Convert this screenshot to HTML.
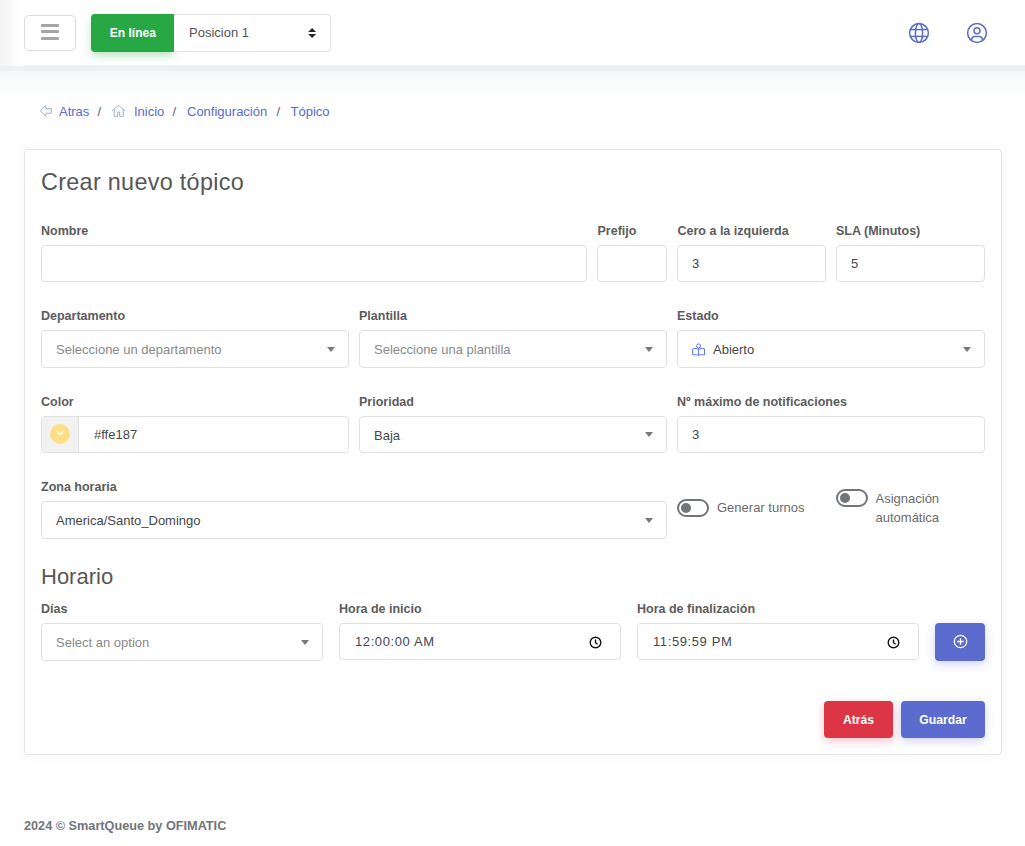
<!DOCTYPE html>
<html>
<head>
<meta charset="utf-8">
<style>
*{box-sizing:border-box;margin:0;padding:0}
html,body{width:1025px;height:846px;overflow:hidden}
body{background:#fefefe;font-family:"Liberation Sans",sans-serif;position:relative;color:#595d6e}
.a{position:absolute}
.t{position:absolute;white-space:nowrap;line-height:1}
#hdr{left:0;top:0;width:1025px;height:66px;background:#fff}
#shd{left:0;top:65px;width:1025px;height:32px;background:linear-gradient(#f1f4f4 0,#ecf0f0 1.5px,#edf1f1 5.5px,#f4f7f7 6.5px,#f8fafa 14px,#fbfcfc 22px,#fefefe 32px)}
#lsh{left:0;top:0;width:24px;height:66px;background:linear-gradient(to right,#f5f5f5 0,#f7f7f7 8px,#fff 22px)}
.ham{left:24px;top:15px;width:52px;height:36px;border:1px solid #dcdcdc;border-radius:5px;background:#fff}
.ham i{position:absolute;left:16px;width:18px;height:3px;background:#a5a5a5;border-radius:1px}
.gbtn{left:91px;top:14px;width:83px;height:38px;background:#28a745;border-radius:4px 0 0 4px;box-shadow:0 4px 8px rgba(40,167,69,.3);color:#fff;font-weight:bold;font-size:12px}
.psel{left:174px;top:14px;width:157px;height:38px;border:1px solid #e2e2e2;border-left:0;border-radius:0 4px 4px 0;background:#fff}
.lbl{font-weight:bold;font-size:12.5px;color:#5c5c5c}
.inp{position:absolute;height:37px;border:1px solid #e0e0e0;border-radius:4px;background:#fff}
.val{font-size:13px;color:#464749}
.ph{font-size:13px;color:#898a8c}
.tri{position:absolute;width:0;height:0;border-left:4.5px solid transparent;border-right:4.5px solid transparent;border-top:5px solid #7a7a7a}
.crumb{font-size:13px;color:#5b6bce}
.sl{font-size:13px;color:#5f6166}
.card{left:24px;top:149px;width:978px;height:606px;background:#fff;border:1px solid #e6e6e6;border-radius:4px;box-shadow:0 0 10px rgba(20,90,90,.06)}
.h3{font-size:23.4px;color:#575757}
.tog{position:absolute;width:31.5px;height:18px;border:2px solid #727578;border-radius:9px}
.tog i{position:absolute;left:2px;top:2px;width:10px;height:10px;border-radius:50%;background:#727578}
.swl{font-size:13px;color:#6a6b6d}
.btn{position:absolute;height:37px;border-radius:4px;color:#fff;font-weight:bold;font-size:12.2px;text-align:center;line-height:39px}
</style>
</head>
<body>
<div id="hdr" class="a"></div>
<div id="shd" class="a"></div>
<div id="lsh" class="a"></div>

<div class="a ham"><i style="top:8px"></i><i style="top:14.3px"></i><i style="top:21px"></i></div>
<div class="a gbtn"><span class="t" style="left:18.8px;top:12.5px">En línea</span></div>
<div class="a psel">
  <span class="t" style="left:15px;top:10.5px;font-size:13px;color:#555">Posicion 1</span>
  <svg class="a" style="left:133px;top:12px" width="11" height="12" viewBox="0 0 11 12"><path d="M5.1 1L9.1 4.9H1.1Z M1.1 7H9.1L5.1 10.9Z" fill="#23272b"/></svg>
</div>

<svg class="a" style="left:908px;top:22px" width="22" height="22" viewBox="0 0 22 22" fill="none" stroke="#5b6bce" stroke-width="1.5">
  <circle cx="11" cy="11" r="9.4"/>
  <ellipse cx="11" cy="11" rx="3.6" ry="9.4"/>
  <line x1="2" y1="7.6" x2="20" y2="7.6"/>
  <line x1="2" y1="14.4" x2="20" y2="14.4"/>
</svg>
<svg class="a" style="left:966px;top:22px" width="22" height="22" viewBox="0 0 22 22" fill="none" stroke="#5b6bce" stroke-width="1.5">
  <circle cx="11" cy="11" r="9.4"/>
  <circle cx="11" cy="8.7" r="3"/>
  <path d="M5.6 18 C5.8 15.5 7.2 14.6 9 14.6 H13 C14.8 14.6 16.2 15.5 16.4 18"/>
</svg>

<!-- breadcrumb -->
<svg class="a" style="left:39px;top:104px" width="14" height="14" viewBox="0 0 14 14" fill="none" stroke="#9fb3c4" stroke-width="1">
  <path d="M1.3 6.9 L6.8 1.5 V4.6 H12.2 V9.2 H6.8 V12.4 Z" stroke-linejoin="round"/>
</svg>
<span class="t crumb" style="left:59px;top:104.5px">Atras</span>
<span class="t sl" style="left:97.5px;top:104.5px">/</span>
<svg class="a" style="left:111px;top:103px" width="15" height="15" viewBox="0 0 15 15" fill="none" stroke="#9fb3c4" stroke-width="1">
  <path d="M1.2 7.8 L7.5 2.4 L13.9 7.8 M3.2 6.2 V13.4 H6.4 V9.2 H8.7 V13.4 H12.3 V6.2"/>
</svg>
<span class="t crumb" style="left:134px;top:104.5px">Inicio</span>
<span class="t sl" style="left:172.5px;top:104.5px">/</span>
<span class="t crumb" style="left:187px;top:104.5px">Configuración</span>
<span class="t sl" style="left:276.5px;top:104.5px">/</span>
<span class="t crumb" style="left:290.5px;top:104.5px">Tópico</span>

<!-- card -->
<div class="a card"></div>
<span class="t h3" style="left:41px;top:171px;letter-spacing:.3px">Crear nuevo tópico</span>

<!-- row 1 -->
<span class="t lbl" style="left:41px;top:224.5px">Nombre</span>
<span class="t lbl" style="left:597.5px;top:224.5px">Prefijo</span>
<span class="t lbl" style="left:677.5px;top:224.5px">Cero a la izquierda</span>
<span class="t lbl" style="left:836px;top:224.5px">SLA (Minutos)</span>
<div class="inp" style="left:41px;top:245px;width:546px"></div>
<div class="inp" style="left:597px;top:245px;width:70px"></div>
<div class="inp" style="left:677px;top:245px;width:149px"><span class="t val" style="left:14px;top:11px">3</span></div>
<div class="inp" style="left:836px;top:245px;width:149px"><span class="t val" style="left:14px;top:11px">5</span></div>

<!-- row 2 -->
<span class="t lbl" style="left:41px;top:309.5px">Departamento</span>
<span class="t lbl" style="left:359px;top:309.5px">Plantilla</span>
<span class="t lbl" style="left:677px;top:309.5px">Estado</span>
<div class="inp" style="left:41px;top:330px;width:308px;height:38px"><span class="t ph" style="left:14px;top:12px">Seleccione un departamento</span><i class="tri" style="left:285px;top:16px"></i></div>
<div class="inp" style="left:359px;top:330px;width:308px;height:38px"><span class="t ph" style="left:14px;top:12px">Seleccione una plantilla</span><i class="tri" style="left:285px;top:16px"></i></div>
<div class="inp" style="left:677px;top:330px;width:308px;height:38px">
  <svg class="a" style="left:7px;top:4.6px" width="30" height="27" viewBox="0 0 30 27" fill="none" stroke="#5d78ff" stroke-width="1">
    <circle cx="13.6" cy="9.9" r="2"/>
    <path d="M13.6 13.2 C12.5 12.5 10 12.3 7.7 12.8 V18.9 C10 18.5 12.5 18.6 13.6 19.4 C14.7 18.6 17.2 18.5 19.5 18.9 V12.8 C17.2 12.3 14.7 12.5 13.6 13.2 Z M13.6 12 V20"/>
  </svg>
  <span class="t val" style="left:35px;top:12px">Abierto</span><i class="tri" style="left:285px;top:16px"></i></div>

<!-- row 3 -->
<span class="t lbl" style="left:41px;top:396px">Color</span>
<span class="t lbl" style="left:359px;top:396px">Prioridad</span>
<span class="t lbl" style="left:677px;top:396px">Nº máximo de notificaciones</span>
<div class="inp" style="left:41px;top:416px;width:308px;overflow:hidden">
  <div class="a" style="left:0;top:0;width:37px;height:35px;background:#f2f2f3;border-right:1px solid #e0e0e0"></div>
  <div class="a" style="left:8px;top:7px;width:20px;height:20px;border-radius:50%;background:#ffdf85"></div>
  <svg class="a" style="left:13.5px;top:13px" width="9" height="6" viewBox="0 0 9 6" fill="none" stroke="#fff" stroke-width="1.2"><path d="M0.8 1 L4.5 4.6 L8.2 1"/></svg>
  <span class="t val" style="left:52px;top:10.5px">#ffe187</span>
</div>
<div class="inp" style="left:359px;top:416px;width:308px"><span class="t val" style="left:14px;top:11.8px">Baja</span><i class="tri" style="left:285px;top:15px"></i></div>
<div class="inp" style="left:677px;top:416px;width:308px"><span class="t val" style="left:14px;top:11px">3</span></div>

<!-- row 4 -->
<span class="t lbl" style="left:41px;top:481px">Zona horaria</span>
<div class="inp" style="left:41px;top:501px;width:626px;height:38px"><span class="t val" style="left:14px;top:12px">America/Santo_Domingo</span><i class="tri" style="left:603px;top:16px"></i></div>
<div class="tog" style="left:677px;top:499px"><i></i></div>
<span class="t swl" style="left:717px;top:500.5px">Generar turnos</span>
<div class="tog" style="left:836px;top:489px"><i></i></div>
<span class="t swl" style="left:875.5px;top:491.5px">Asignación</span>
<span class="t swl" style="left:875.5px;top:510.5px">automática</span>

<!-- horario -->
<span class="t h3" style="left:41px;top:565.7px;font-size:22px">Horario</span>
<span class="t lbl" style="left:41px;top:602.5px">Días</span>
<span class="t lbl" style="left:339px;top:602.5px">Hora de inicio</span>
<span class="t lbl" style="left:637px;top:602.5px">Hora de finalización</span>
<div class="inp" style="left:41px;top:623px;width:282px;height:38px"><span class="t ph" style="left:14px;top:11.5px">Select an option</span><i class="tri" style="left:259px;top:16px"></i></div>
<div class="inp" style="left:339px;top:623px;width:282px"><span class="t val" style="left:15px;top:11px;color:#44474f;letter-spacing:.6px">12:00:00 AM</span>
  <svg class="a" style="left:249.4px;top:11.5px" width="13" height="13" viewBox="0 0 13 13" fill="none" stroke="#111" stroke-width="1.4"><circle cx="6.5" cy="6.5" r="5.3"/><path d="M6.5 3.6 V6.7 L8.6 8.2"/></svg>
</div>
<div class="inp" style="left:637px;top:623px;width:282px"><span class="t val" style="left:15px;top:11px;color:#44474f;letter-spacing:.6px">11:59:59 PM</span>
  <svg class="a" style="left:249.4px;top:11.5px" width="13" height="13" viewBox="0 0 13 13" fill="none" stroke="#111" stroke-width="1.4"><circle cx="6.5" cy="6.5" r="5.3"/><path d="M6.5 3.6 V6.7 L8.6 8.2"/></svg>
</div>
<div class="btn" style="left:935px;top:623px;width:50px;height:38px;background:#5b6bce;box-shadow:0 3px 10px rgba(88,103,221,.3)">
  <svg class="a" style="left:18px;top:10.6px" width="15" height="15" viewBox="0 0 15 15" fill="none" stroke="#fff" stroke-width="1.3"><circle cx="7.5" cy="7.5" r="6.2"/><path d="M7.5 4.2 V10.8 M4.2 7.5 H10.8"/></svg>
</div>

<div class="btn" style="left:824px;top:701px;width:69px;background:#dc3545;box-shadow:0 3px 10px rgba(220,53,69,.3)">Atrás</div>
<div class="btn" style="left:901px;top:701px;width:84px;background:#5b6bce;box-shadow:0 3px 10px rgba(88,103,221,.3)">Guardar</div>

<span class="t" style="left:24px;top:819.5px;font-weight:bold;font-size:12.7px;color:#747679">2024 © SmartQueue by OFIMATIC</span>
</body>
</html>
